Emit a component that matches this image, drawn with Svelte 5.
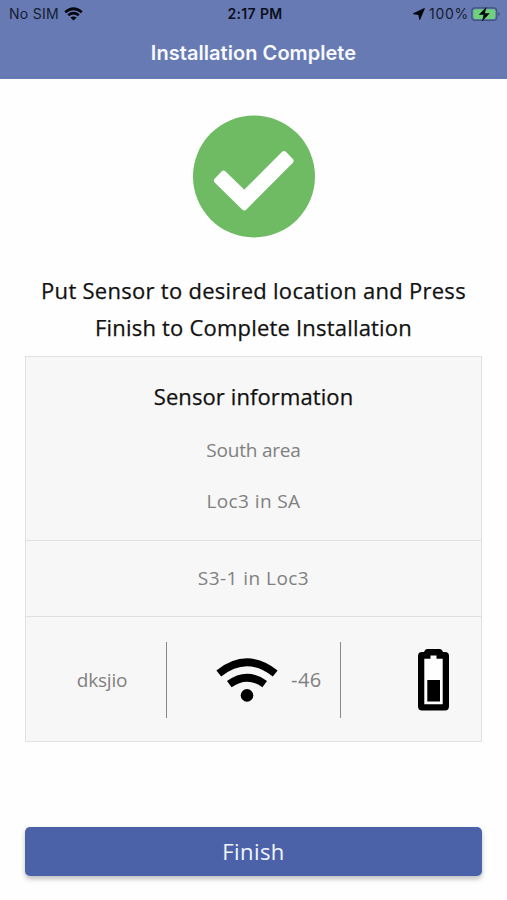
<script>
  export let areaName = "South area";
  export let location = "Loc3 in SA";
  export let sensorName = "S3-1 in Loc3";
  export let sensorId = "dksjio";
  export let signal = -46;
</script>

<div class="screen">
  <header>
    <div class="status-bar">
      <div class="carrier">
        <span>No SIM</span>
        <svg width="19" height="14" viewBox="0 0 19 14">
          <g fill="none" stroke="#05070f" stroke-width="2.7">
            <path d="M1.2 5.2Q9.5-1.7 17.8 5.2" />
            <path d="M4.2 8.2Q9.5 4 14.8 8.2" />
          </g>
          <path d="M6.4 10.5Q9.5 8.3 12.6 10.5L9.5 13.6Z" fill="#05070f" />
        </svg>
      </div>
      <div class="time">2:17 PM</div>
      <div class="power">
        <svg width="12" height="12" viewBox="0 0 12 12">
          <path d="M11.4.5L6.7 11.5 5.8 6.5.5 5.7Z" fill="#05070f" stroke="#05070f" stroke-linejoin="round" />
        </svg>
        <span>100%</span>
        <svg class="charge" width="30" height="16" viewBox="0 0 30 16">
          <rect x=".8" y="1.8" width="25" height="12.6" rx="3.2" fill="none" stroke="#3e557d" stroke-width="1.2" />
          <rect x="2.3" y="3.2" width="22" height="9.8" rx="2" fill="#6fd17b" />
          <path d="M27.3 6Q29 6.5 29 8.1T27.3 10.3Z" fill="#435886" />
          <path d="M15.5 1L7.7 8.8H12.6L11 15.4 18.8 7.2H13.9Z" fill="#05070f" />
        </svg>
      </div>
    </div>
    <h1>Installation Complete</h1>
  </header>

  <main>
    <svg class="success" width="122" height="123" viewBox="0 0 122 123">
      <circle cx="61" cy="61.5" r="61" fill="#6fbb64" />
      <path
        d="M24 65.5L30.5 58.7 51.3 78.8 91 39.2 97.5 45.9 51.3 92.3Z"
        fill="#fff" stroke="#fff" stroke-width="6" stroke-linejoin="round"
      />
    </svg>

    <p class="instruction">
      <span>Put Sensor to desired location and Press</span><br />
      <span class="second">Finish to Complete Installation</span>
    </p>

    <section class="card">
      <div class="area">
        <h2>Sensor information</h2>
        <p>{areaName}</p>
        <p class="location">{location}</p>
      </div>
      <div class="sensor">{sensorName}</div>
      <div class="details">
        <div class="sensor-id">{sensorId}</div>
        <div class="signal">
          <svg width="62" height="45" viewBox="0 0 62 45">
            <g fill="none" stroke="#000" stroke-width="7.8">
              <path d="M2.8 15.5Q31-6.8 59.2 15.5" />
              <path d="M13.3 26.2Q31 13.2 48.7 26.2" />
            </g>
            <circle cx="31" cy="37.4" r="6.3" />
          </svg>
          <span>{signal}</span>
        </div>
        <div class="battery">
          <svg width="31" height="62" viewBox="0 0 31 62">
            <path d="M9 0H22Q24 0 25 3H27Q31 3 31 7V57Q31 61.6 27 61.6H4Q0 61.6 0 57V7Q0 3 4 3H6Q7 0 9 0Z" />
            <path d="M6.3 9.7H12.5V6.5H18.5V9.7H24.7V55.3H6.3Z" fill="#fefefe" />
            <path d="M9.3 31H22V52.5H9.3Z" />
          </svg>
        </div>
      </div>
    </section>

    <button><span>Finish</span></button>
  </main>
</div>

<style>
  :global(body) {
    margin: 0;
    background: #fefefe;
  }

  .screen {
    width: 507px;
    height: 900px;
    overflow: hidden;
    background: #fefefe;
    font-family: "Open Sans", "Noto Sans", sans-serif;
  }

  svg {
    display: block;
    flex: none;
  }

  h1, h2, p {
    margin: 0;
    font-weight: 500;
  }

  /* header */
  header {
    height: 79px;
    background: #677ab3;
    font-family: Inter, sans-serif;
  }

  .status-bar {
    display: grid;
    grid-template-columns: 1fr auto 1fr;
    align-items: center;
    height: 27px;
    padding: 0 6px 0 9px;
    font-size: 14px;
    letter-spacing: 0.3px;
    color: #151c30;
  }

  .carrier, .power {
    display: flex;
    align-items: center;
    gap: 5px;
  }

  .time {
    font-weight: 600;
    letter-spacing: 0.35px;
    color: #0b0f1c;
  }

  .power {
    justify-content: flex-end;
    gap: 4px;
  }

  .power span {
    letter-spacing: 0.7px;
  }

  .charge {
    margin-left: -2px;
  }

  h1 {
    font-size: 20px;
    font-weight: 600;
    line-height: 52px;
    letter-spacing: 0.05px;
    text-align: center;
    color: #f8f9ff;
  }

  main {
    display: flex;
    flex-direction: column;
    align-items: stretch;
    padding: 36px 25px 0;
  }

  .success {
    align-self: center;
  }

  .instruction {
    margin-top: 34px;
    font-size: 22px;
    line-height: 37px;
    letter-spacing: 0.28px;
    text-align: center;
    white-space: nowrap;
    color: #111;
    -webkit-text-stroke: 0.25px #111;
  }

  .second {
    letter-spacing: 0.2px;
  }

  /* sensor card */
  .card {
    box-sizing: border-box;
    height: 386px;
    margin-top: 10px;
    border: 1px solid #e0e0e0;
    background: #f7f7f7;
    font-size: 19px;
    text-align: center;
    color: #808080;
  }

  .area {
    box-sizing: border-box;
    height: 184px;
    padding-top: 19px;
    border-bottom: 1px solid #e0e0e0;
  }

  .area p {
    margin-top: 14px;
    font-weight: 400;
    line-height: 40px;
    letter-spacing: -0.2px;
  }

  .area .location {
    margin-top: 11px;
    letter-spacing: 0.4px;
  }

  h2 {
    font-size: 22px;
    line-height: 40px;
    letter-spacing: 0.1px;
    color: #111;
    -webkit-text-stroke: 0.25px #111;
  }

  .sensor {
    height: 75px;
    border-bottom: 1px solid #e0e0e0;
    line-height: 75px;
    letter-spacing: 0.45px;
  }

  .details {
    display: grid;
    grid-template-columns: 141px 174px 1fr;
    height: 76px;
    padding-top: 25px;
  }

  .sensor-id, .signal {
    border-right: 1px solid #888;
    line-height: 76px;
  }

  .sensor-id {
    padding-left: 12px;
    letter-spacing: -0.2px;
  }

  .signal {
    display: flex;
    align-items: center;
    gap: 13px;
    padding-left: 49px;
  }

  .signal span {
    line-height: 74px;
    font-size: 20px;
    letter-spacing: 0.5px;
  }

  .battery {
    display: flex;
    align-items: center;
    justify-content: flex-end;
    padding-right: 32px;
  }

  button {
    height: 49px;
    margin-top: 85px;
    padding: 0 0 2px;
    border: 0;
    border-radius: 5px;
    background: #4c62a8;
    box-shadow: 0 3px 5px rgba(0, 0, 0, 0.25);
    font: 500 22px/46px "Open Sans", "Noto Sans", sans-serif;
    letter-spacing: 0.4px;
    color: #f2f5ff;
  }
</style>
